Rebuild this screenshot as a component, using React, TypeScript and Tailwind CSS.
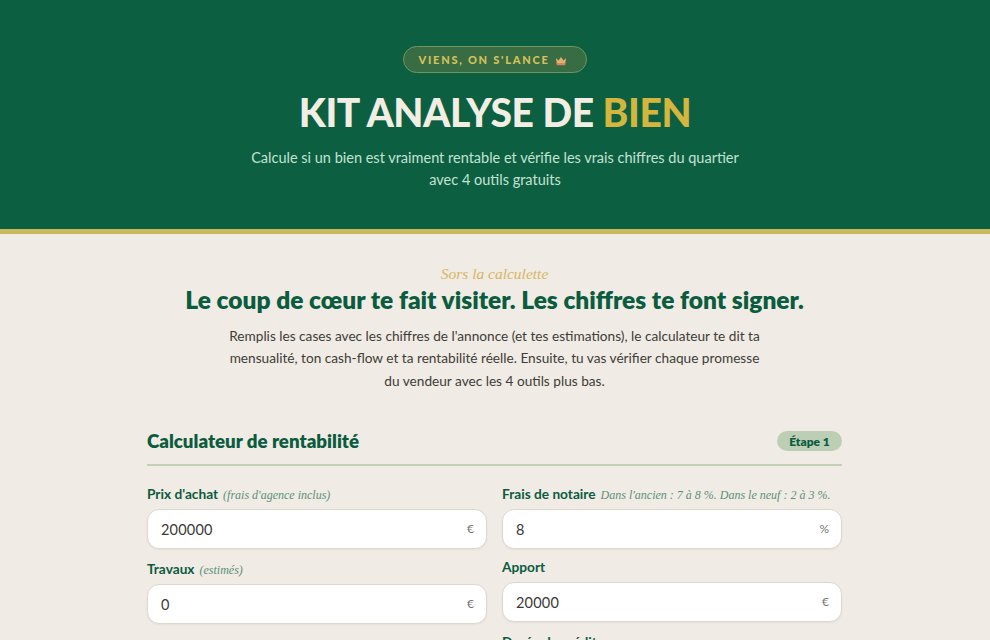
import type { ReactNode } from "react";

const sans = "font-['Lato','Noto_Sans',sans-serif]";
const hand = "font-['Liberation_Serif',serif] italic";

function Field({ label, note, value, unit }: { label: string; note?: ReactNode; value: string; unit: string }) {
  return (
    <div className="flex flex-col">
      <div className="mb-[5px] flex items-baseline gap-[5px] whitespace-nowrap">
        <span className="text-[13.7px] leading-[20px] font-bold text-[#0b5c3f]">{label}</span>
        {note && <span className={`${hand} text-[12px] text-[#5a9178]`}>{note}</span>}
      </div>
      <div className="flex h-[40px] items-center justify-between rounded-[12px] border border-[#dcd8cf] bg-white pr-[12px] pl-[13px] shadow-[0_1px_2px_rgba(0,0,0,0.05)]">
        <span className="pt-[2px] text-[14.5px] tracking-[0.2px] text-[#3a3a36]">{value}</span>
        <span className="text-[12px] text-[#77776f]">{unit}</span>
      </div>
    </div>
  );
}

export default function App() {
  return (
    <div className={`h-[640px] overflow-hidden bg-[#f0ebe4] ${sans}`}>
      {/* Hero */}
      <header className="flex h-[234px] flex-col items-center border-b-[5px] border-b-[#c9b95c] bg-[#0c6041] pt-[46px]">
        <div className="flex h-[27px] w-[184px] items-center justify-center gap-[6px] rounded-full border border-[#6f9560] bg-[#386d44] pt-[1px] pr-[4px] text-[11px] font-black tracking-[1.75px] text-[#d6c05a]">
          VIENS, ON S'LANCE
          <svg width="12" height="10" viewBox="0 0 12 10" className="mt-[2px]">
            <path d="M1 2l2.5 2.5L6 1l2.5 3.5L11 2l-.8 6H1.8z" fill="#e3b06a" />
            <rect x="1.8" y="7" width="8.4" height="2.2" fill="#d9826a" />
          </svg>
        </div>
        <h1 className="mt-[17px] text-[39px] leading-[45px] font-black tracking-[-0.4px] text-[#f3eee3]">
          KIT ANALYSE DE <span className="text-[#d4b63f]">BIEN</span>
        </h1>
        <p className="mt-[12px] w-[520px] text-center text-[14.5px] leading-[22.4px] text-[#c4e2d2]">
          Calcule si un bien est vraiment rentable et vérifie les vrais chiffres du quartier
          <br />
          avec 4 outils gratuits
        </p>
      </header>

      <main className="ml-[147px] w-[695px] pt-[30px]">
        <div className="flex flex-col items-center text-center">
          <div className={`${hand} text-[15.5px] leading-[20px] text-[#d8b65e]`}>Sors la calculette</div>
          <h2 className="mt-[2px] text-[24.5px] leading-[28px] font-extrabold whitespace-nowrap text-[#0b5c3f]">
            Le coup de cœur te fait visiter. Les chiffres te font signer.
          </h2>
          <p className="mt-[11px] text-[13.65px] leading-[22.4px] whitespace-nowrap text-[#3d3d38]">
            Remplis les cases avec les chiffres de l'annonce (et tes estimations), le calculateur te dit ta
            <br />
            mensualité, ton cash-flow et ta rentabilité réelle. Ensuite, tu vas vérifier chaque promesse
            <br />
            du vendeur avec les 4 outils plus bas.
          </p>
        </div>

        <div className="mt-[37px] flex items-center justify-between border-b-2 border-b-[#c3d2b4] pb-[11px]">
          <h3 className="text-[18.7px] leading-[24px] font-extrabold text-[#0b5c3f]">Calculateur de rentabilité</h3>
          <span className="flex h-[20px] w-[65px] items-center justify-center rounded-full bg-[#bccfb4] pt-[1px] text-[12px] font-extrabold text-[#0b5c3f]">
            Étape 1
          </span>
        </div>

        <div className="mt-[18px] grid grid-cols-2 gap-x-[15px]">
          <div className="flex flex-col gap-[10px]">
            <Field label="Prix d'achat" note="(frais d'agence inclus)" value="200000" unit="€" />
            <Field label="Travaux" note="(estimés)" value="0" unit="€" />
            <div className="mt-[2px]">
              <Field label="Taux du crédit" note="(hors assurance)" value="3.5" unit="%" />
            </div>
          </div>
          <div className="flex flex-col gap-[8px]">
            <Field label="Frais de notaire" note="Dans l'ancien : 7 à 8 %. Dans le neuf : 2 à 3 %." value="8" unit="%" />
            <Field label="Apport" value="20000" unit="€" />
            <div className="mt-[2px]">
              <Field label="Durée du crédit" value="20" unit="ans" />
            </div>
          </div>
        </div>
      </main>
    </div>
  );
}
